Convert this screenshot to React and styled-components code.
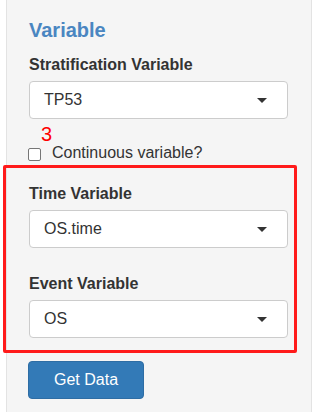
import React from 'react';
import styled, { createGlobalStyle } from 'styled-components';

const GlobalStyle = createGlobalStyle`
  body {
    margin: 0;
    background: #fff;
    font-family: "Liberation Sans", Arial, sans-serif;
    color: #333;
  }
`;

function SelectBox({ value }) {
  return (
    <Select>
      <SelectValue>{value}</SelectValue>
      <Caret />
    </Select>
  );
}

function FormGroup({ label, value, first }) {
  return (
    <Group first={first}>
      <Label>{label}</Label>
      <SelectBox value={value} />
    </Group>
  );
}

export default function App() {
  return (
    <>
      <GlobalStyle />
      <Panel>
        <Heading>Variable</Heading>
        <FormGroup first label="Stratification Variable" value="TP53" />
        <Note>3</Note>
        <CheckRow>
          <Check type="checkbox" />
          <CheckLabel>Continuous variable?</CheckLabel>
        </CheckRow>
        <Highlight>
          <FormGroup first label="Time Variable" value="OS.time" />
          <FormGroup label="Event Variable" value="OS" />
        </Highlight>
        <Button>Get Data</Button>
      </Panel>
    </>
  );
}

const Panel = styled.div`
  box-sizing: border-box;
  width: 306px;
  min-height: 430px;
  margin-left: 6px;
  padding: 19px 23px 20px 22px;
  background: #f5f5f5;
  border: 1px solid #e3e3e3;
  border-top: none;
  display: flex;
  flex-direction: column;
  align-items: flex-start;
`;

const Heading = styled.h3`
  margin: 0;
  font-size: 20px;
  line-height: 22px;
  font-weight: bold;
  color: #4a86c1;
`;

const Group = styled.div`
  width: 259px;
  margin-top: ${(p) => (p.first ? '14px' : '26px')};
  display: flex;
  flex-direction: column;
`;

const Label = styled.label`
  font-size: 16px;
  line-height: 20px;
  font-weight: bold;
  color: #333;
  margin-bottom: 6px;
`;

const Select = styled.div`
  box-sizing: border-box;
  height: 38px;
  width: 100%;
  padding: 0 20px 0 14px;
  background: #fff;
  border: 1px solid #ccc;
  border-radius: 4px;
  display: flex;
  align-items: center;
  justify-content: space-between;
`;

const SelectValue = styled.span`
  font-size: 16px;
  color: #333;
`;

const Caret = styled.span`
  width: 0;
  height: 0;
  border-left: 5.5px solid transparent;
  border-right: 5.5px solid transparent;
  border-top: 5px solid #333;
`;

const Note = styled.div`
  margin: 6px 0 0 12px;
  font-size: 20px;
  line-height: 18px;
  color: #ff0000;
`;

const CheckRow = styled.label`
  display: flex;
  align-items: flex-start;
  font-size: 16px;
  line-height: 20px;
`;

const Check = styled.input`
  appearance: none;
  box-sizing: border-box;
  width: 13px;
  height: 13px;
  margin: 5px 11px 0 -1px;
  background: #fff;
  border: 1px solid #767676;
  border-radius: 2px;
`;

const CheckLabel = styled.span`
  color: #333;
`;

const Highlight = styled.div`
  margin: 2px -9px 0 -26px;
  padding: 0 6px 12px 23px;
  border: 3px solid #ff1a1a;
  border-radius: 2px;
  align-self: stretch;
  & > div:first-child {
    margin-top: 16px;
  }
`;

const Button = styled.button`
  margin-top: 8px;
  margin-left: -1px;
  height: 38px;
  padding: 0 25px;
  background: #337ab7;
  border: 1px solid #2e6da4;
  border-radius: 4px;
  color: #fff;
  font-family: "Liberation Sans", Arial, sans-serif;
  font-size: 16px;
`;
